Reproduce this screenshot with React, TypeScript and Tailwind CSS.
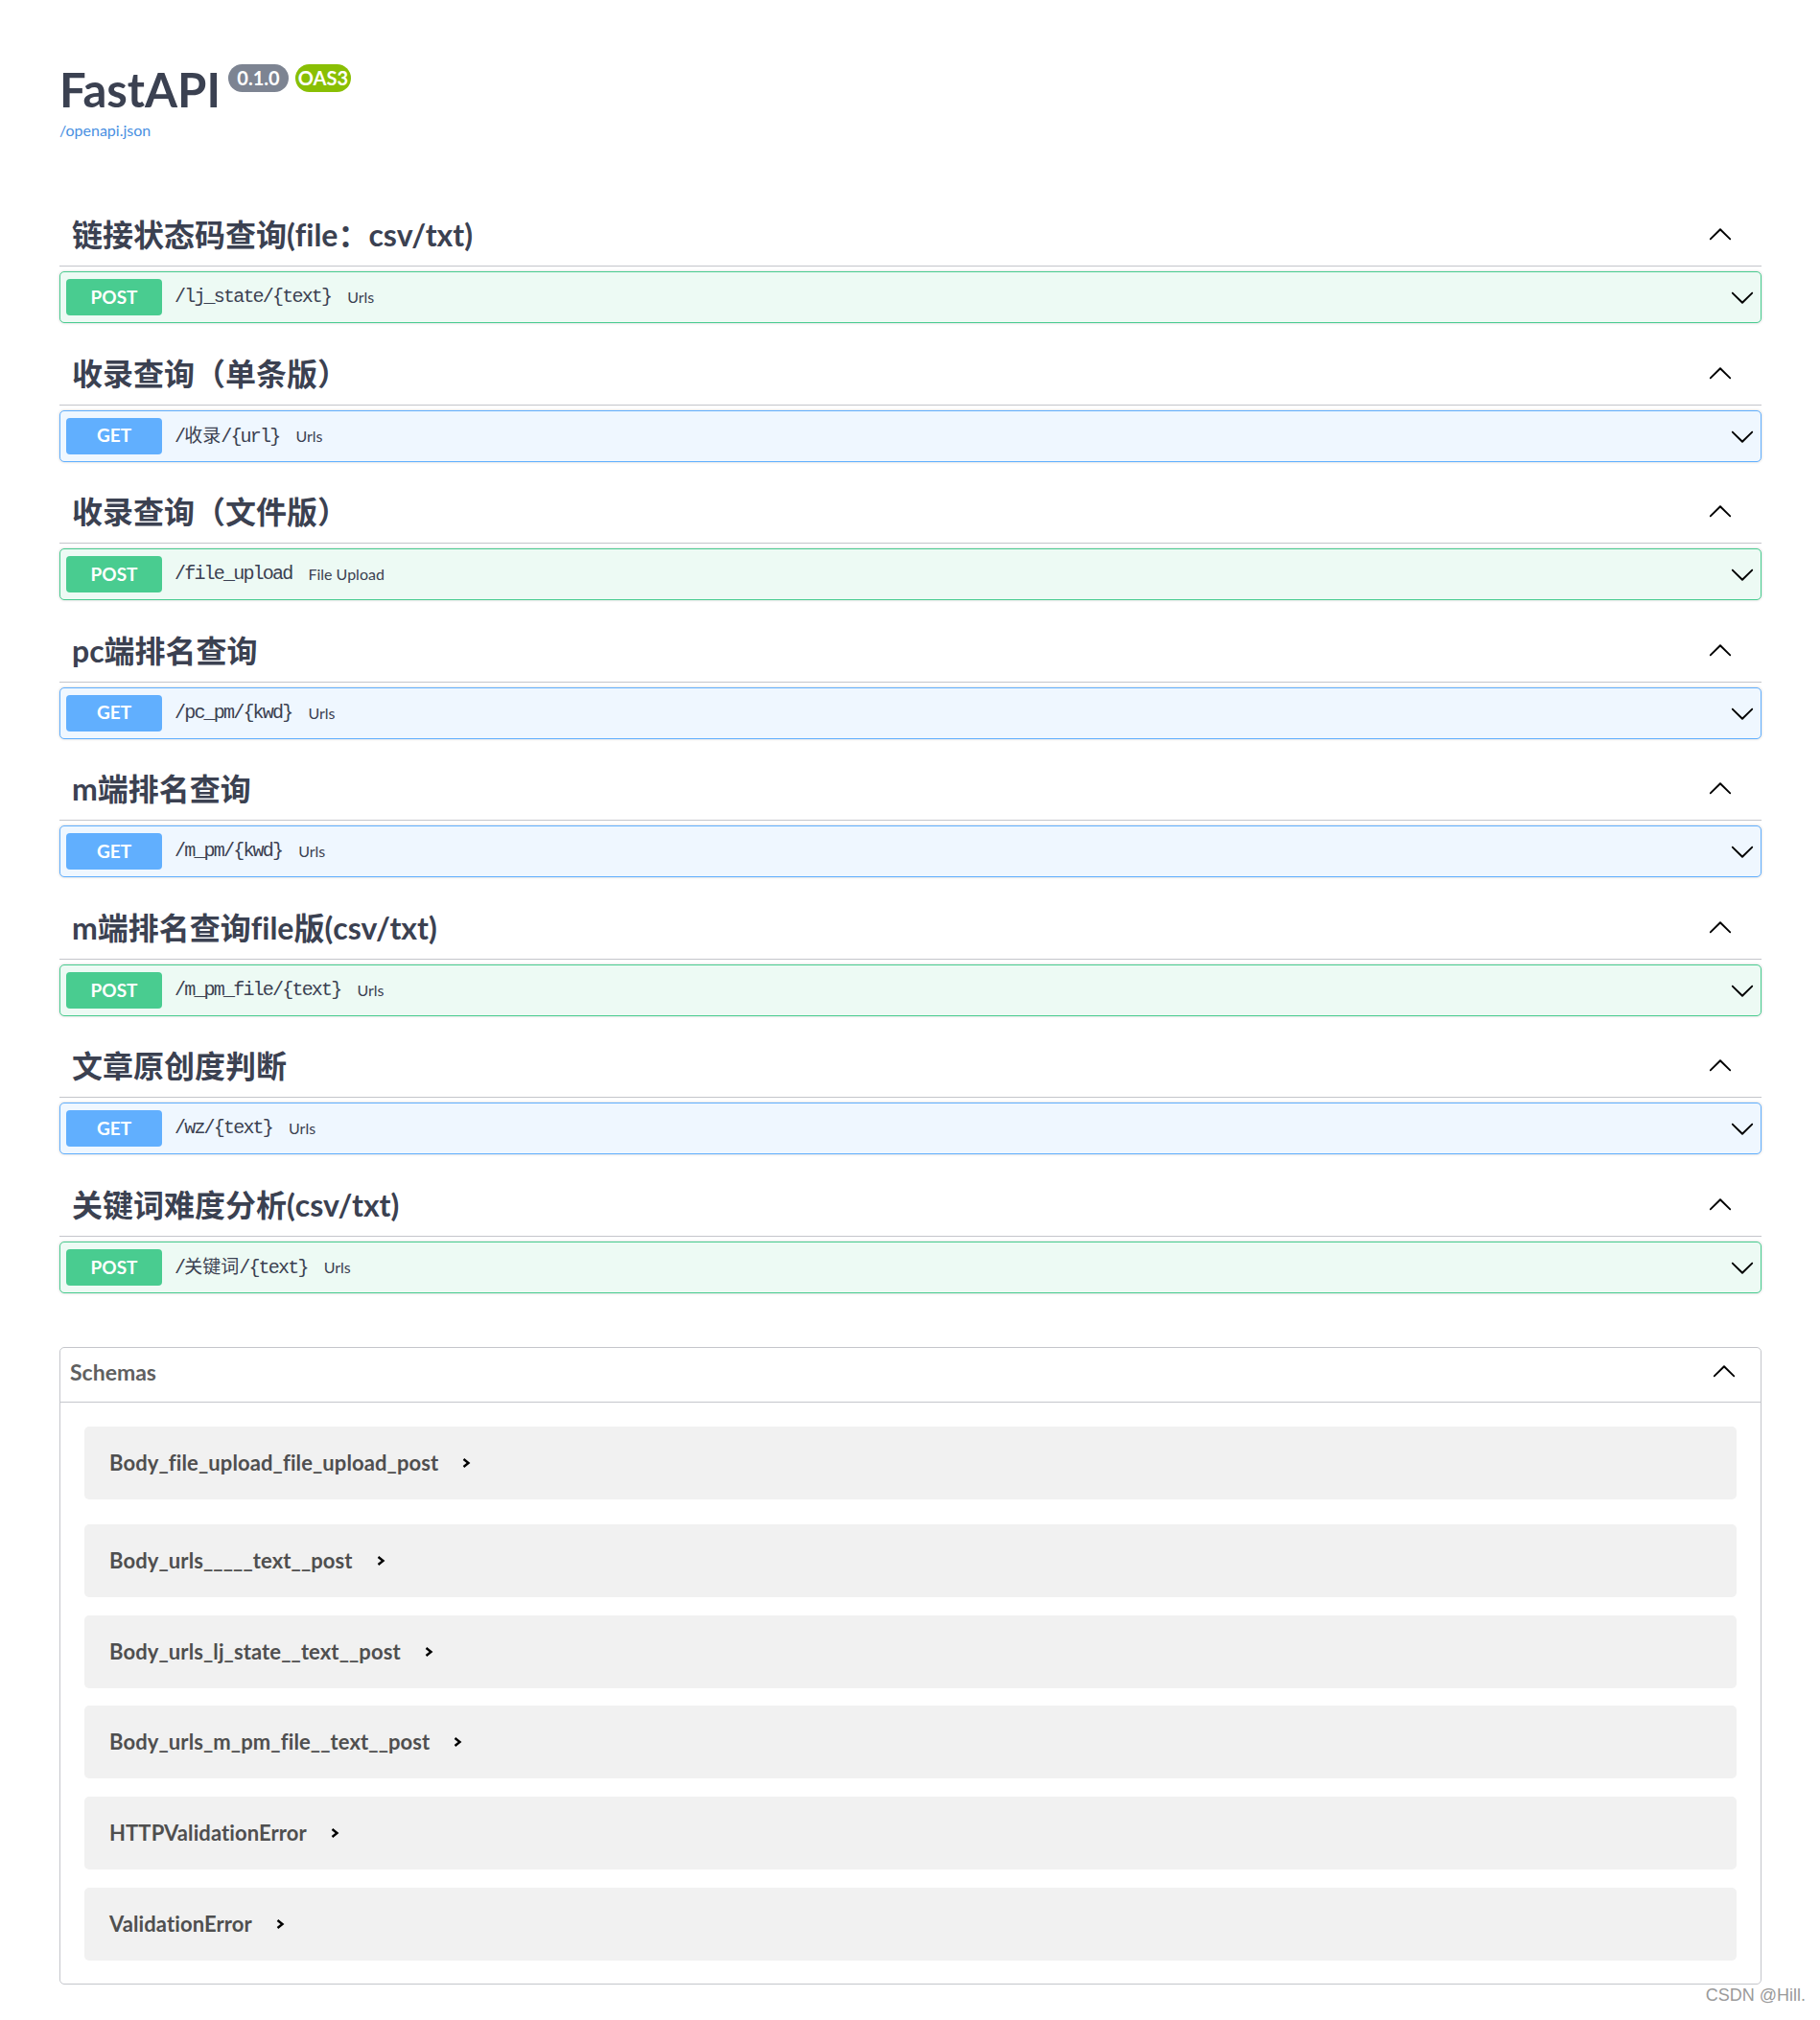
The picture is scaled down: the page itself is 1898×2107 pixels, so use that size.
import type { ReactNode } from "react";

type Method = "GET" | "POST";

interface Operation {
  tag: string;
  method: Method;
  path: string;
  summary: string;
}

const operations: Operation[] = [
  { tag: "链接状态码查询(file：csv/txt)", method: "POST", path: "/lj_state/{text}", summary: "Urls" },
  { tag: "收录查询（单条版）", method: "GET", path: "/收录/{url}", summary: "Urls" },
  { tag: "收录查询（文件版）", method: "POST", path: "/file_upload", summary: "File Upload" },
  { tag: "pc端排名查询", method: "GET", path: "/pc_pm/{kwd}", summary: "Urls" },
  { tag: "m端排名查询", method: "GET", path: "/m_pm/{kwd}", summary: "Urls" },
  { tag: "m端排名查询file版(csv/txt)", method: "POST", path: "/m_pm_file/{text}", summary: "Urls" },
  { tag: "文章原创度判断", method: "GET", path: "/wz/{text}", summary: "Urls" },
  { tag: "关键词难度分析(csv/txt)", method: "POST", path: "/关键词/{text}", summary: "Urls" },
];

const schemas = [
  "Body_file_upload_file_upload_post",
  "Body_urls_____text__post",
  "Body_urls_lj_state__text__post",
  "Body_urls_m_pm_file__text__post",
  "HTTPValidationError",
  "ValidationError",
];

// gap under each schema card, the first one is a bit larger in the screenshot
const schemaGaps = ["mb-[26px]", "mb-[19px]", "mb-[18px]", "mb-[19px]", "mb-[19px]", "mb-0"];

const methodStyles: Record<Method, { block: string; badge: string }> = {
  POST: {
    block: "bg-[#edfaf4] border-[#49cc90]",
    badge: "bg-[#49cc90]",
  },
  GET: {
    block: "bg-[#eff7ff] border-[#61affe]",
    badge: "bg-[#61affe]",
  },
};

function Arrow({ up = false, className = "" }: { up?: boolean; className?: string }) {
  return (
    <svg
      viewBox="0 0 20 20"
      width={26}
      height={26}
      className={`shrink-0 ${up ? "rotate-180" : ""} ${className}`}
      aria-hidden="true"
    >
      <path
        fill="#000"
        d="M17.418 6.109c.272-.268.709-.268.979 0s.27.701 0 .969l-7.908 7.83c-.27.268-.707.268-.979 0l-7.908-7.83c-.27-.268-.27-.701 0-.969.271-.268.709-.268.979 0L10 13.25l7.418-7.141z"
      />
    </svg>
  );
}

function SmallChevron() {
  return (
    <svg width={10} height={12} viewBox="0 0 10 12" className="shrink-0" aria-hidden="true">
      <path d="M2.5 2 L7.5 6 L2.5 10" fill="none" stroke="#000" strokeWidth={2.4} />
    </svg>
  );
}

function Badge({ className, children }: { className: string; children: ReactNode }) {
  return (
    <span
      className={`h-[29px] rounded-full text-center text-[20px] font-bold leading-[29px] text-white ${className}`}
    >
      {children}
    </span>
  );
}

/* path text: latin in a tall mono face, chinese segments a bit smaller */
function PathText({ path }: { path: string }) {
  const parts = path.split(/([\u4e00-\u9fff]+)/).filter(Boolean);
  return (
    <span className="pl-[13px] font-['Liberation_Mono','Noto_Sans_CJK_SC',monospace] text-[20px] tracking-[-1.8px] text-[#3b4151]">
      {parts.map((p, i) =>
        /[\u4e00-\u9fff]/.test(p) ? (
          <span key={i} className="font-['Noto_Sans_CJK_SC',sans-serif] text-[19px] tracking-[0px]">
            {p}
          </span>
        ) : (
          <span key={i}>{p}</span>
        ),
      )}
    </span>
  );
}

function TagSection({ op }: { op: Operation }) {
  const style = methodStyles[op.method];
  return (
    <section className="mb-[20.57px]">
      {/* tag header */}
      <div className="flex items-center justify-between border-b border-[#c4c6cb] py-[13px] pl-[13px] pr-[30px]">
        <h3 className="text-[32px] font-bold leading-[38px] text-[#3b4151] [font-variant-ligatures:none]">
          {op.tag}
        </h3>
        <Arrow up />
      </div>

      {/* operation row */}
      <div
        className={`mt-[5px] flex h-[54px] items-center rounded-[5px] border px-[6px] shadow-[0_0_3px_rgba(0,0,0,0.19)] ${style.block}`}
      >
        <span
          className={`flex h-[38px] w-[100px] shrink-0 items-center justify-center rounded-[4px] text-[19px] font-bold text-white ${style.badge}`}
        >
          {op.method}
        </span>
        <PathText path={op.path} />
        <span className="pl-[17px] text-[16px] text-[#3b4151]">{op.summary}</span>
        <Arrow className="ml-auto" />
      </div>
    </section>
  );
}

export default function App() {
  return (
    <div className="relative min-h-[2107px] bg-white pl-[62px] pr-[61px] pt-[69px] font-['Lato','Noto_Sans_CJK_SC',sans-serif]">
      {/* info */}
      <div className="flex items-start">
        <h1 className="text-[49px] font-bold leading-[48px] text-[#3b4151]">FastAPI</h1>
        <div className="ml-[8px] mt-[-2px] flex gap-[7px]">
          <Badge className="w-[63px] bg-[#7d8492]">0.1.0</Badge>
          <Badge className="w-[58px] bg-[#89bf04]">OAS3</Badge>
        </div>
      </div>
      <a className="mt-[7px] block text-[16px] leading-[24px] text-[#4990e2]">/openapi.json</a>

      {/* operations grouped by tag */}
      <div className="mt-[65px]">
        {operations.map((op) => (
          <TagSection key={op.path} op={op} />
        ))}
      </div>

      {/* schemas */}
      <section className="mt-[56px] rounded-[5px] border border-[#c4c6cb]">
        <div className="flex h-[57px] items-center justify-between border-b border-[#c4c6cb] pb-[6px] pl-[10px] pr-[25px]">
          <h4 className="text-[23px] font-bold text-[#606060]">Schemas</h4>
          <Arrow up />
        </div>
        <div className="px-[25px] pb-[24px] pt-[25px]">
          {schemas.map((name, i) => (
            <div
              key={name}
              className={`flex h-[76px] items-center rounded-[5px] bg-[#f1f1f1] pl-[26px] ${schemaGaps[i]}`}
            >
              <span className="text-[22px] font-bold tracking-[0.1px] text-[#4f4f4f] [font-variant-ligatures:none]">
                {name}
              </span>
              <span className="ml-[24px]">
                <SmallChevron />
              </span>
            </div>
          ))}
        </div>
      </section>

      <div className="absolute bottom-[16px] right-[15px] font-['Liberation_Sans',Arial,sans-serif] text-[18px] leading-[20px] text-[#9a9a9a]">
        CSDN @Hill.
      </div>
    </div>
  );
}
